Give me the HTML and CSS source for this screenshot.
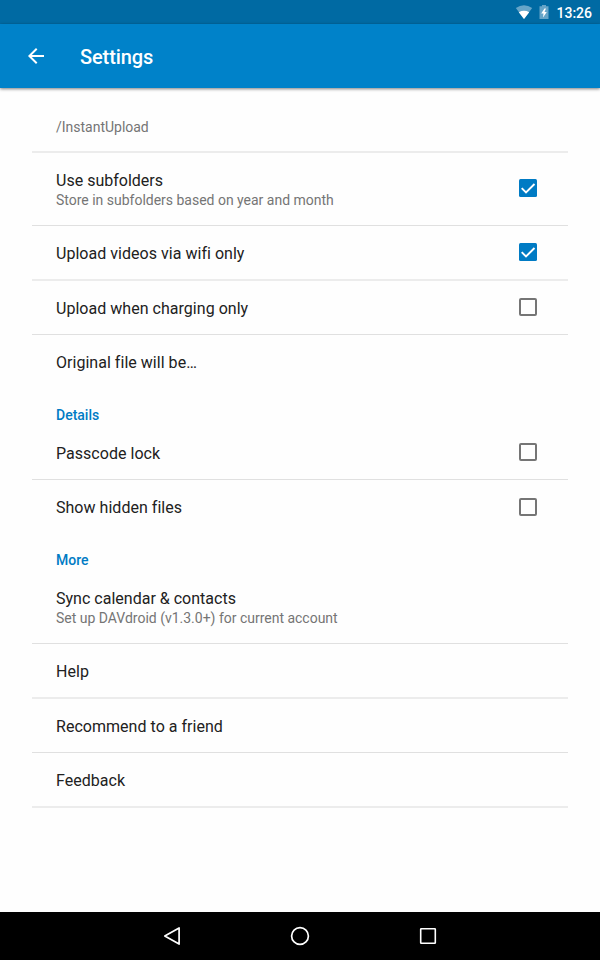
FILE: index.html
```
<!DOCTYPE html>
<html lang="en">
<head>
<meta charset="utf-8">
<title>Settings</title>
<link rel="stylesheet" href="styles.css">
</head>
<body>
<div class="status">
  <svg class="wifi" width="18" height="14" viewBox="0 0 18 14"><path d="M9 14 .8 3.1Q9-2.7 17.2 3.1Z" fill="#fff" fill-opacity=".4"/><path d="M9 14 3.8 7.3Q9 4.4 14.2 7.3Z" fill="#fff"/></svg>
  <svg class="battery" width="10" height="14" viewBox="0 0 10 14"><path d="M3 0h4v1.3h2.5V14H.5V1.3H3Z" fill="#fff" fill-opacity=".4"/><path d="M5.5 3.5 2.2 8.6h2.3L4 12.5 7.8 7H5.5L7 3.5Z" fill="#fff"/></svg>
  <span class="time">13:26</span>
</div>
<header class="bar">
  <svg class="back" width="24" height="24" viewBox="0 0 24 24"><path d="M20 11H7.83l5.59-5.59L12 4l-8 8 8 8 1.41-1.41L7.83 13H20v-2z" fill="#fff"/></svg>
  <h1>Settings</h1>
</header>
<main class="list">
  <div class="row first soft"><div class="sub">/InstantUpload</div></div>
  <div class="row tall line"><div><div class="title">Use subfolders</div><div class="sub">Store in subfolders based on year and month</div></div>
    <svg class="check" width="18" height="18" viewBox="0 0 18 18"><rect width="18" height="18" rx="1.5" fill="#007bc4"/><path d="M2.7 9.2 7 13.5 15.5 5" fill="none" stroke="#fff" stroke-width="1.9"/></svg></div>
  <div class="row soft"><div class="title">Upload videos via wifi only</div>
    <svg class="check" width="18" height="18" viewBox="0 0 18 18"><rect width="18" height="18" rx="1.5" fill="#007bc4"/><path d="M2.7 9.2 7 13.5 15.5 5" fill="none" stroke="#fff" stroke-width="1.9"/></svg></div>
  <div class="row line"><div class="title">Upload when charging only</div><span class="check box"></span></div>
  <div class="row"><div class="title">Original file will be…</div></div>
  <h2>Details</h2>
  <div class="row line"><div class="title">Passcode lock</div><span class="check box"></span></div>
  <div class="row"><div class="title">Show hidden files</div><span class="check box"></span></div>
  <h2>More</h2>
  <div class="row tall line"><div><div class="title">Sync calendar &amp; contacts</div><div class="sub">Set up DAVdroid (v1.3.0+) for current account</div></div></div>
  <div class="row soft"><div class="title">Help</div></div>
  <div class="row line"><div class="title">Recommend to a friend</div></div>
  <div class="row soft"><div class="title">Feedback</div></div>
</main>
<nav class="nav">
  <svg width="24" height="24" viewBox="0 0 24 24"><path d="M4.8 12 19.1 3.9V20.1Z" fill="none" stroke="#fff" stroke-width="1.7" stroke-linejoin="round"/></svg>
  <svg width="24" height="24" viewBox="0 0 24 24"><circle cx="12" cy="12" r="8.4" fill="none" stroke="#fff" stroke-width="1.7"/></svg>
  <svg width="24" height="24" viewBox="0 0 24 24"><rect x="4.7" y="4.7" width="14.6" height="14.6" rx=".6" fill="none" stroke="#fff" stroke-width="1.6"/></svg>
</nav>
</body>
</html>
```
FILE: styles.css
```
* { box-sizing: border-box; }
body {
  margin: 0;
  width: 600px;
  height: 960px;
  display: flex;
  flex-direction: column;
  background: #fefefe;
  color: #212121;
  font-family: Roboto, sans-serif;
  overflow: hidden;
}
svg { display: block; flex: none; }
.status {
  height: 24px;
  flex: none;
  display: flex;
  justify-content: flex-end;
  align-items: center;
  padding: 1px 8px 0 0;
  background: #006aa3;
  color: #fff;
}
.wifi { margin: 0 6px 2px 0; }
.battery { margin: 0 7px 2px 0; }
.time { font-size: 14px; font-weight: 500; line-height: 20px; }
.bar {
  height: 64px;
  flex: none;
  display: flex;
  align-items: center;
  padding-left: 24px;
  background: #0082c9;
  color: #fff;
  box-shadow: 0 1px 3px rgba(0, 0, 0, .5);
}
h1 { margin: 2px 0 0 32px; font-size: 20px; font-weight: 500; line-height: 28px; letter-spacing: -.1px; }
.list { flex: 1; padding: 0 32px; }
.row {
  height: 54px;
  display: flex;
  justify-content: space-between;
  align-items: center;
  padding: 0 31px 0 24px;
}
.line { border-bottom: 1px solid #e0e0e0; }
.soft { height: 55px; border-bottom: 2px solid #ececec; }
.first { height: 65px; padding-top: 14px; }
.tall { height: 73px; padding-top: 1px; }
.title { font-size: 16px; line-height: 20px; padding-top: 1px; letter-spacing: .03px; }
.line > .title, .soft > .title { padding-top: 3px; }
.tall .title { line-height: 19px; letter-spacing: .01px; }
.sub { font-size: 14px; line-height: 20px; color: #757575; letter-spacing: -.01px; }
.check { flex: none; width: 18px; height: 18px; margin-bottom: 1px; }
.line .check, .soft .check { margin-bottom: 2px; }
.tall .check { margin-bottom: 3px; }
.box { border: 2px solid #757575; border-radius: 2px; }
h2 {
  height: 37px;
  margin: 0;
  padding: 16px 24px 0;
  font-size: 14px;
  font-weight: 500;
  line-height: 21px;
  color: #007bc4;
}
.nav {
  height: 48px;
  flex: none;
  display: flex;
  justify-content: center;
  align-items: center;
  gap: 104px;
  background: #000;
}
```
